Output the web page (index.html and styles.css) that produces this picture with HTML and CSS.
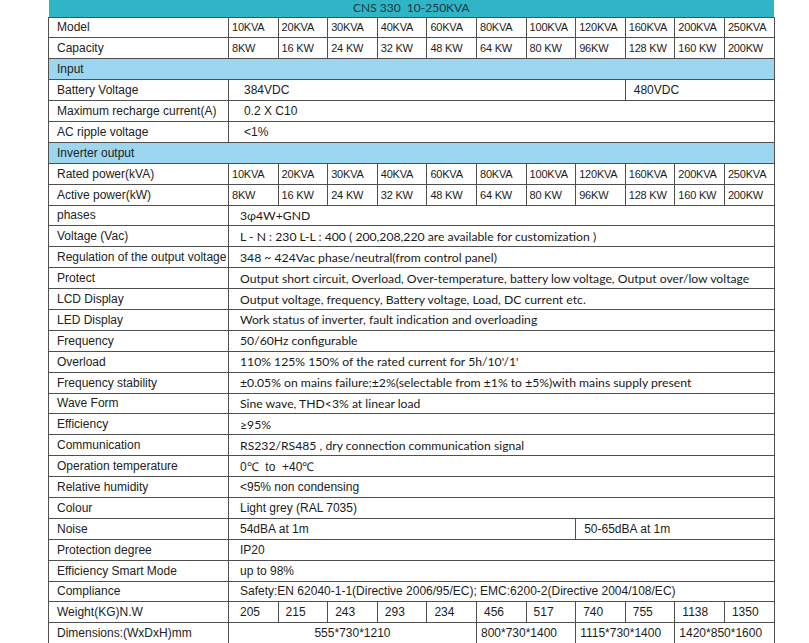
FILE: index.html
```html
<!DOCTYPE html>
<html>
<head>
<meta charset="utf-8">
<link rel="stylesheet" href="styles.css">
</head>
<body>
<table class="spec">
  <colgroup>
    <col class="c-label">
    <col span="11" class="c-val">
  </colgroup>
  <tr class="title"><td colspan="12">CNS 330&nbsp;&nbsp;10-250KVA</td></tr>
  <tr class="grid"><td class="lbl">Model</td><td>10KVA</td><td>20KVA</td><td>30KVA</td><td>40KVA</td><td>60KVA</td><td>80KVA</td><td>100KVA</td><td>120KVA</td><td>160KVA</td><td>200KVA</td><td>250KVA</td></tr>
  <tr class="grid"><td class="lbl">Capacity</td><td>8KW</td><td>16 KW</td><td>24 KW</td><td>32 KW</td><td>48 KW</td><td>64 KW</td><td>80 KW</td><td>96KW</td><td>128 KW</td><td>160 KW</td><td>200KW</td></tr>
  <tr class="sect"><td colspan="12">Input</td></tr>
  <tr><td class="lbl">Battery Voltage</td><td colspan="8" class="val in">384VDC</td><td colspan="3" class="val side">480VDC</td></tr>
  <tr><td class="lbl">Maximum recharge current(A)</td><td colspan="11" class="val in">0.2 X C10</td></tr>
  <tr><td class="lbl">AC ripple voltage</td><td colspan="11" class="val in">&lt;1%</td></tr>
  <tr class="sect"><td colspan="12">Inverter output</td></tr>
  <tr class="grid"><td class="lbl">Rated power(kVA)</td><td>10KVA</td><td>20KVA</td><td>30KVA</td><td>40KVA</td><td>60KVA</td><td>80KVA</td><td>100KVA</td><td>120KVA</td><td>160KVA</td><td>200KVA</td><td>250KVA</td></tr>
  <tr class="grid"><td class="lbl">Active power(kW)</td><td>8KW</td><td>16 KW</td><td>24 KW</td><td>32 KW</td><td>48 KW</td><td>64 KW</td><td>80 KW</td><td>96KW</td><td>128 KW</td><td>160 KW</td><td>200KW</td></tr>
  <tr><td class="lbl">phases</td><td colspan="11" class="val cal">3φ4W+GND</td></tr>
  <tr><td class="lbl">Voltage (Vac)</td><td colspan="11" class="val cal">L - N : 230 L-L : 400 ( 200,208,220 are available for customization )</td></tr>
  <tr><td class="lbl">Regulation of the output voltage</td><td colspan="11" class="val cal">348 ~ 424Vac phase/neutral(from control panel)</td></tr>
  <tr><td class="lbl">Protect</td><td colspan="11" class="val cal">Output short circuit, Overload, Over-temperature, battery low voltage, Output over/low voltage</td></tr>
  <tr><td class="lbl">LCD Display</td><td colspan="11" class="val cal">Output voltage, frequency, Battery voltage, Load, DC current etc.</td></tr>
  <tr><td class="lbl">LED Display</td><td colspan="11" class="val cal">Work status of inverter, fault indication and overloading</td></tr>
  <tr><td class="lbl">Frequency</td><td colspan="11" class="val cal">50/60Hz configurable</td></tr>
  <tr><td class="lbl">Overload</td><td colspan="11" class="val cal">110% 125% 150% of the rated current for 5h/10'/1'</td></tr>
  <tr><td class="lbl">Frequency stability</td><td colspan="11" class="val cal">±0.05% on mains failure;±2%(selectable from ±1% to ±5%)with mains supply present</td></tr>
  <tr><td class="lbl">Wave Form</td><td colspan="11" class="val cal">Sine wave, THD&lt;3% at linear load</td></tr>
  <tr><td class="lbl">Efficiency</td><td colspan="11" class="val cal">≥95%</td></tr>
  <tr><td class="lbl">Communication</td><td colspan="11" class="val cal">RS232/RS485 , dry connection communication signal</td></tr>
  <tr><td class="lbl">Operation temperature</td><td colspan="11" class="val">0℃&nbsp; to&nbsp; +40℃</td></tr>
  <tr><td class="lbl">Relative humidity</td><td colspan="11" class="val">&lt;95% non condensing</td></tr>
  <tr><td class="lbl">Colour</td><td colspan="11" class="val">Light grey (RAL 7035)</td></tr>
  <tr><td class="lbl">Noise</td><td colspan="7" class="val">54dBA at 1m</td><td colspan="4" class="val side">50-65dBA at 1m</td></tr>
  <tr><td class="lbl">Protection degree</td><td colspan="11" class="val">IP20</td></tr>
  <tr><td class="lbl">Efficiency Smart Mode</td><td colspan="11" class="val">up to 98%</td></tr>
  <tr><td class="lbl">Compliance</td><td colspan="11" class="val">Safety:EN 62040-1-1(Directive 2006/95/EC); EMC:6200-2(Directive 2004/108/EC)</td></tr>
  <tr class="weight"><td class="lbl">Weight(KG)N.W</td><td class="first">205</td><td>215</td><td>243</td><td>293</td><td>234</td><td>456</td><td>517</td><td>740</td><td>755</td><td>1138</td><td>1350</td></tr>
  <tr class="dims"><td class="lbl">Dimensions:(WxDxH)mm</td><td colspan="5" class="center">555*730*1210</td><td colspan="2">800*730*1400</td><td colspan="2">1115*730*1400</td><td colspan="2">1420*850*1600</td></tr>
</table>
</body>
</html>
```

FILE: styles.css
```css
body {
  margin: 0;
  background: #ffffff;
  font-family: "Liberation Sans", Arial, sans-serif;
  color: #1c1c1c;
}

.spec {
  margin-left: 48px;
  border-collapse: collapse;
  table-layout: fixed;
  width: 726px;
}

.c-label { width: 180px; }
.c-val { width: 49.6px; }

.spec tr { height: 20.9px; }

.spec td {
  border: 1px solid #505050;
  padding: 0 0 0 3px;
  font-size: 11px;
  white-space: nowrap;
  overflow: hidden;
  vertical-align: middle;
  letter-spacing: -0.2px;
}

.spec td.lbl {
  font-size: 12px;
  padding-left: 8px;
  letter-spacing: 0;
  color: #222;
}

.spec .title { height: 17px; }

.spec .title td {
  background: #30b5c6;
  border: none;
  text-align: center;
  font-family: Lato, "Liberation Sans", sans-serif;
  font-size: 12px;
  letter-spacing: 0;
  color: #163a42;
  padding: 0;
  line-height: 14px;
}

.spec .sect td {
  background: #9cd6f1;
  font-size: 12px;
  letter-spacing: 0;
  padding-left: 8px;
  color: #222;
}

.spec td.val {
  padding-left: 11px;
  font-size: 12px;
  letter-spacing: 0;
}

.spec td.val.in { padding-left: 15px; }
.spec td.val.side { padding-left: 8px; }

.spec td.cal {
  font-family: Lato, "Liberation Sans", sans-serif;
  font-size: 12.2px;
  letter-spacing: 0;
  color: #1a1a1a;
}

.spec .weight td {
  font-size: 12px;
  letter-spacing: 0;
  padding-left: 7px;
}

.spec .weight td.first { padding-left: 11px; }
.spec .weight td.lbl { padding-left: 8px; }

.spec .dims td {
  font-size: 12px;
  letter-spacing: 0;
  padding-left: 4px;
}

.spec .dims td.center {
  text-align: center;
  padding-left: 0;
}

.spec .dims td.lbl { padding-left: 8px; }
```
